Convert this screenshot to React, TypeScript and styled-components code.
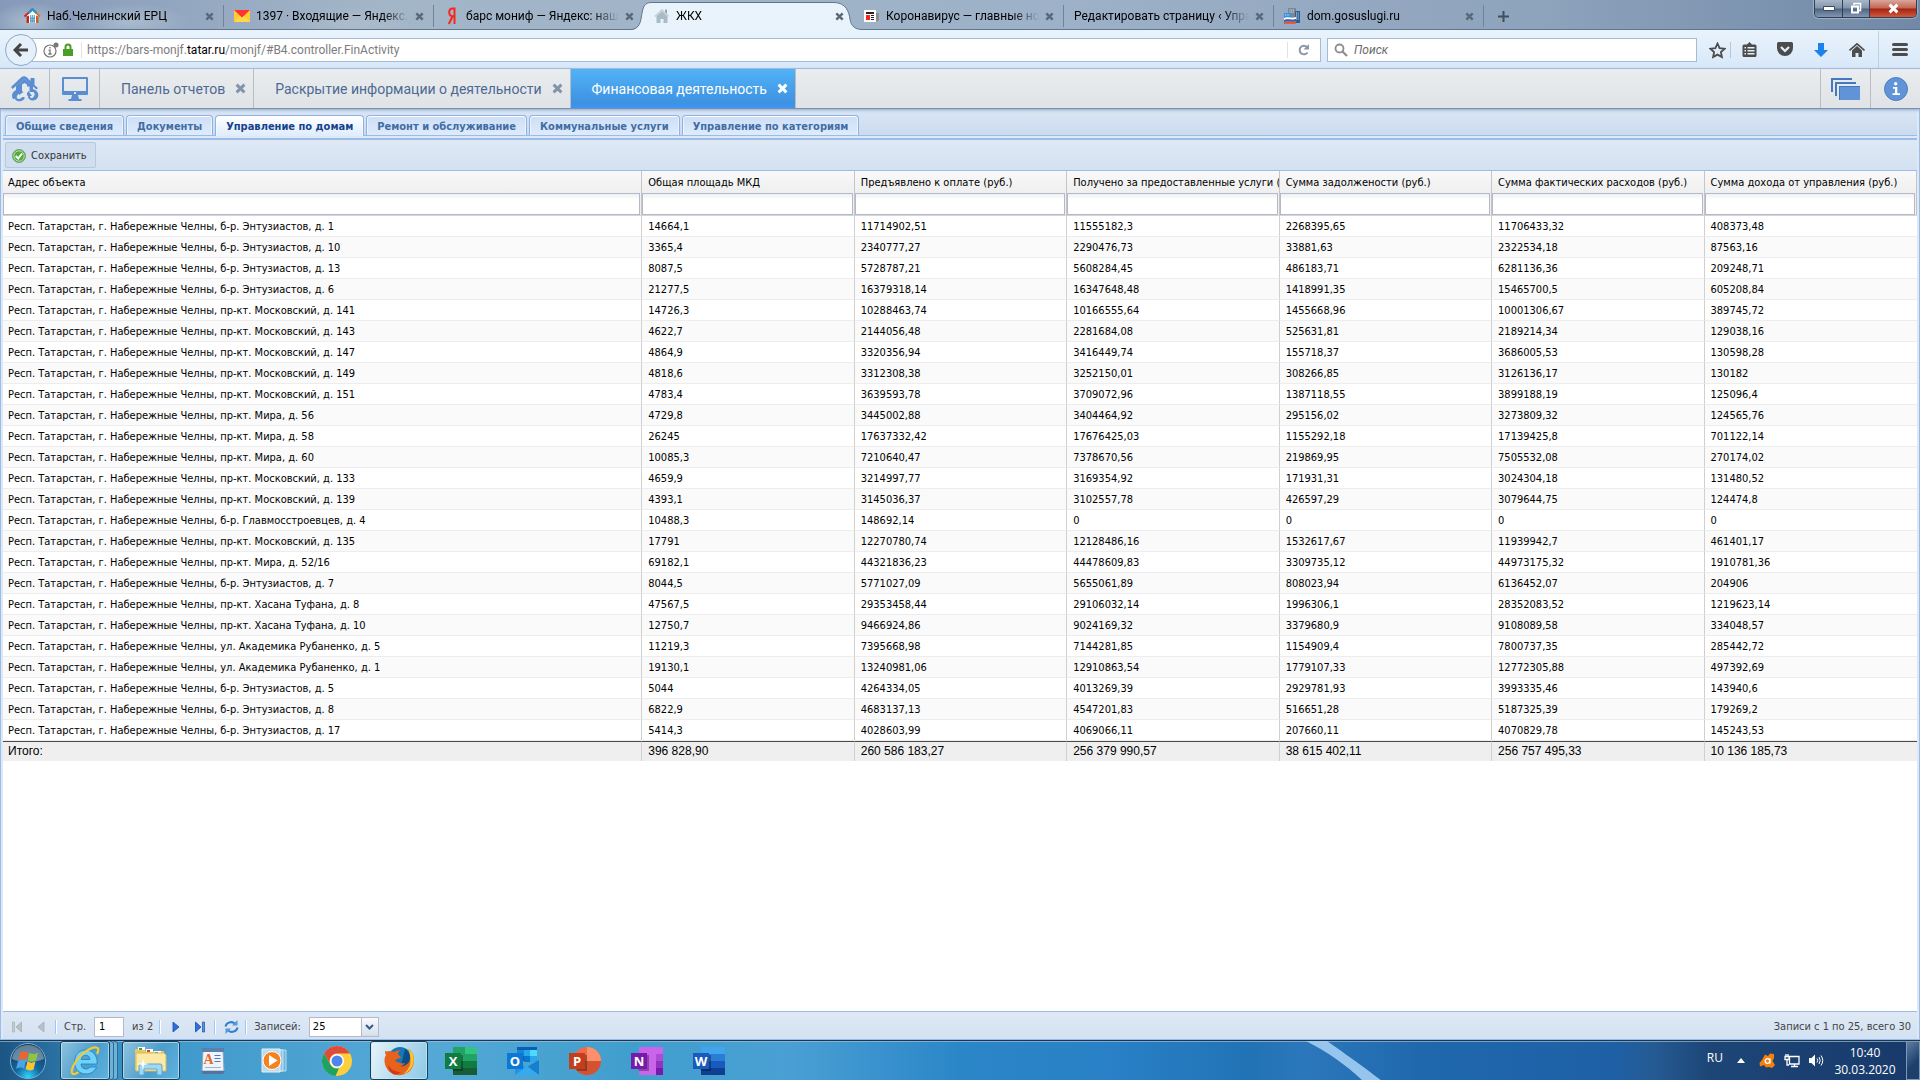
import React from "react";
import styled, { createGlobalStyle, css } from "styled-components";

const ui = `"DejaVu Sans Condensed", "Noto Sans", sans-serif`;
const system = `"Open Sans", "Noto Sans", sans-serif`;
const chrome = `Roboto, "Noto Sans", sans-serif`;

const Global = createGlobalStyle`
  *, *::before, *::after { box-sizing: border-box; }
  body { margin: 0; background: #fff; }
  button, input, select { font: inherit; color: inherit; margin: 0; padding: 0; border: 0; background: none; border-radius: 0; }
  button { cursor: pointer; }
  svg { display: block; flex: none; }
`;

const Screen = styled.div`
  min-height: 100vh;
  display: flex;
  flex-direction: column;
  font: 11px/14px ${ui};
  color: #000;
`;

/* ---------- Browser frame ---------- */

const TabStrip = styled.header`
  height: 30px;
  display: flex;
  align-items: stretch;
  padding-left: 14px;
  background:
    radial-gradient(ellipse 40px 20px at 30px 22px, #c3d3dc99, transparent),
    radial-gradient(ellipse 60px 18px at 130px 22px, #b9cbd899, transparent),
    radial-gradient(ellipse 60px 18px at 350px 24px, #c0c9d066, transparent),
    linear-gradient(90deg, #8599b900, #a3b6c8 20%, #9db1c8 55%, #8ea3bc 80%, #7189a7),
    #8599b9;
  border-bottom: 1px solid #5f7690;
  font: 12px/16px ${chrome};
  overflow: visible;
`;

const BrowserTab = styled.div<{ $active?: boolean; $plain?: boolean }>`
  position: relative;
  width: 210px;
  padding: 3px 10px 0;
  display: flex;
  align-items: center;
  gap: 6px;
  height: 29px;
  isolation: isolate;
  ${(p) =>
    !p.$active && !p.$plain &&
    css`
      &::after {
        content: "";
        position: absolute;
        right: 0;
        top: 5px;
        bottom: 2px;
        width: 1px;
        background: #70839b;
      }
    `}
`;

const ActiveShape = styled.svg`
  position: absolute;
  left: -14px;
  top: 0;
  z-index: -1;
`;

const TabTitle = styled.button`
  flex: 1;
  min-width: 0;
  overflow: hidden;
  white-space: nowrap;
  text-align: left;
  mask-image: linear-gradient(90deg, #000 calc(100% - 26px), transparent);
`;

const IconButton = styled.button`
  display: grid;
  place-items: center;
`;

const NewTab = styled(IconButton)`
  width: 38px;
  height: 29px;
  padding-top: 3px;
`;

const WindowButtons = styled.div`
  margin-left: auto;
  margin-right: 3px;
  height: 18px;
  display: flex;
  border: 1px solid #2e3f56;
  border-top: 0;
  border-radius: 0 0 5px 5px;
  overflow: hidden;
  box-shadow: 0 0 1px 1px #c3d0df88;
`;

const WindowButton = styled(IconButton)<{ $close?: boolean }>`
  width: ${(p) => (p.$close ? 47 : 27)}px;
  background: ${(p) =>
    p.$close
      ? "linear-gradient(#d9a69c, #c2654f 48%, #a32313 52%, #cf5a3c)"
      : "linear-gradient(#a9b7c8, #8295ad 48%, #4f6480 52%, #8296b0)"};
  & + & { border-left: 1px solid #2e3f56; }
`;

const NavBar = styled.nav`
  height: 39px;
  padding-top: 1px;
  display: flex;
  align-items: center;
  background: linear-gradient(#e9f3fc, #d8e8f9);
  border-bottom: 1px solid #a7bfda;
  font: 12px/16px ${chrome};
`;

const Back = styled(IconButton)`
  width: 32px;
  height: 32px;
  margin-left: 5px;
  border: 1px solid #8fa9c4;
  border-radius: 50%;
  background: #e6f0fa;
  z-index: 1;
`;

const UrlBox = styled.div`
  flex: 1;
  height: 24px;
  margin-left: -6px;
  padding-left: 11px;
  display: flex;
  align-items: center;
  background: #fff;
  border: 1px solid #a5bbd2;
`;

const Url = styled.a`
  flex: 1;
  margin-left: 6px;
  padding-left: 5px;
  border-left: 1px solid #dde3e8;
  color: #7c7c7c;
  text-decoration: none;
  b { font-weight: 400; color: #000; }
`;

const Reload = styled(IconButton)`
  width: 33px;
  height: 16px;
  border-left: 1px solid #dde3e8;
`;

const Search = styled.label`
  width: 370px;
  height: 24px;
  margin-left: 6px;
  padding-left: 6px;
  display: flex;
  align-items: center;
  gap: 6px;
  background: #fff;
  border: 1px solid #a5bbd2;
  input { flex: 1; outline: 0; font-style: italic; }
  input::placeholder { color: #6b6b6b; opacity: 1; }
`;

const NavTools = styled.div`
  display: flex;
  align-items: center;
  padding-left: 8px;
  height: 100%;
`;

const NavTool = styled(IconButton)<{ $kind?: "star" | "menu" }>`
  width: ${(p) => (p.$kind === "menu" ? 42 : p.$kind === "star" ? 26 : 36)}px;
  height: ${(p) => (p.$kind === "menu" ? "100%" : "16px")};
  ${(p) => p.$kind === "menu" && "margin-left: 3px; border-left: 1px solid #bfd0e2;"}
  ${(p) => p.$kind === "star" && "border-right: 1px solid #b4c5d6;"}
`;

/* ---------- Application bar ---------- */

const AppBar = styled.nav`
  height: 40px;
  display: flex;
  background: linear-gradient(#eaedf0, #e0e3e6);
  border-bottom: 1px solid #7391bd;
  box-shadow: 0 1px 3px #8fa3bf;
  z-index: 1;
  font: 14px/18px ${chrome};
`;

const AppIcon = styled(IconButton)<{ $right?: boolean }>`
  width: 50px;
  border: 0 solid #b9bdc1;
  border-width: ${(p) => (p.$right ? "0 0 0 1px" : "0 1px 0 0")};
`;

const AppTab = styled.div<{ $active?: boolean }>`
  display: flex;
  align-items: center;
  gap: 10px;
  padding: 0 7px 0 21px;
  border-right: 1px solid #b9bdc1;
  color: ${(p) => (p.$active ? "#fff" : "#4d6a92")};
  ${(p) => p.$active && "background: linear-gradient(#52b2f7, #3d92e2 88%, #3c96f8);"}
`;

const Spacer = styled.div`
  flex: 1;
`;

/* ---------- Panel ---------- */

const Panel = styled.main`
  flex: 1;
  display: flex;
  flex-direction: column;
  padding: 0 2px;
  background: #dfe9f6;
  border: 0 solid #99bce8;
  border-width: 0 1px 1px;
`;

const SubTabs = styled.div`
  height: 27px;
  display: flex;
  align-items: flex-end;
  gap: 2px;
  padding: 0 2px;
  background: linear-gradient(#dbe6f4, #cbdbef);
  border-bottom: 1px solid #99bce8;
`;

const SubTab = styled.button<{ $active?: boolean }>`
  height: ${(p) => (p.$active ? 21 : 20)}px;
  margin-bottom: ${(p) => (p.$active ? -1 : 0)}px;
  padding: 2px 10px 0;
  border: 1px solid #8db2e3;
  border-bottom: 0;
  border-radius: 4px 4px 0 0;
  box-shadow: inset 0 1px 0 #fff, inset 1px 0 0 #fff8, inset -1px 0 0 #fff8;
  background: ${(p) => (p.$active ? "linear-gradient(#fff, #deecfd)" : "linear-gradient(#ccdef6, #dfebfb)")};
  color: ${(p) => (p.$active ? "#15428b" : "#416da3")};
  font-weight: 700;
  white-space: nowrap;
`;

const Toolbar = styled.div`
  height: 33px;
  padding: 2px;
  margin-top: 2px;
  display: flex;
  align-items: center;
  border-top: 2px solid #99bce8;
  border-bottom: 1px solid #99bce8;
  background: linear-gradient(#dfe9f5, #d3e1f1);
`;

const Save = styled.button`
  height: 26px;
  padding: 1px 8px 0 6px;
  display: flex;
  align-items: center;
  gap: 5px;
  border: 1px solid #b5c9e0;
  border-radius: 2px;
  background: #d0deef;
  color: #333;
`;

const GridArea = styled.section`
  flex: 1;
  background: #fff;
`;

const Table = styled.table`
  width: 100%;
  table-layout: fixed;
  border-collapse: separate;
  border-spacing: 0;
  th, td { padding: 1px 0 0 6px; }
  th:first-child, td:first-child { padding-left: 5px; }
`;

const HeadCell = styled.th`
  height: 22px;
  font-weight: 400;
  text-align: left;
  white-space: nowrap;
  overflow: hidden;
  background: linear-gradient(#f9f9f9, #eeeff0);
  border-right: 1px solid #c5c5c5;
`;

const FilterCell = styled.td`
  &&&, &&&:first-child { padding: 0 1px 0 0; }
  height: 23px;
  background: #eeeff0;
  border-right: 1px solid #c5c5c5;
  border-bottom: 1px solid #d5d5d5;
`;

const FilterInput = styled.input`
  display: block;
  width: 100%;
  height: 22px;
  padding: 0 4px;
  border: 1px solid #b5b8c8;
  background: linear-gradient(#eef0f1, #fff 6px);
`;

const Row = styled.tr`
  &:nth-child(even) { background: #fafafa; }
`;

const Cell = styled.td`
  height: 21px;
  white-space: nowrap;
  overflow: hidden;
  border-bottom: 1px solid #ededed;
  &:not(:last-child) { border-right: 1px solid #d0d0d0; }
`;

const TotalCell = styled.td`
  &&& { padding-top: 0; padding-bottom: 1px; }
  height: 20px;
  border-top: 1px solid #4a4a4a;
  background: #efefef;
  font: 12px/16px "Liberation Sans", Arial, sans-serif;
  &:not(:last-child) { border-right: 1px solid #d0d0d0; }
`;

const Pager = styled.footer`
  height: 28px;
  display: flex;
  align-items: center;
  padding: 2px 6px 0 2px;
  border-top: 1px solid #99bce8;
  background: linear-gradient(#dfe9f5, #d3e1f1);
  color: #444;
`;

const PagerButton = styled(IconButton)`
  width: 24px;
  height: 22px;
`;

const Divider = styled.span`
  width: 2px;
  height: 14px;
  margin: 0 3px 0 2px;
  border-left: 1px solid #98c8ff;
  border-right: 1px solid #fff;
`;

const PagerLabel = styled.label`
  display: flex;
  align-items: center;
  gap: 8px;
  padding: 0 4px;
`;

const PageInput = styled.input`
  width: 30px;
  height: 20px;
  padding: 0 4px;
  border: 1px solid #b5b8c8;
  background: #fff;
  color: #000;
`;

const SizeBox = styled.span`
  display: flex;
  height: 20px;
  border: 1px solid #b5b8c8;
  background: #fff;
  color: #000;
  select { appearance: none; width: 51px; padding-left: 3px; outline: 0; }
`;

const SizeArrow = styled.span`
  width: 17px;
  display: grid;
  place-items: center;
  border-left: 1px solid #b5b8c8;
  background: linear-gradient(#f8fafd, #d5dfec);
`;

/* ---------- Taskbar ---------- */

const Taskbar = styled.footer`
  position: relative;
  height: 40px;
  display: flex;
  align-items: stretch;
  gap: 4px;
  border-top: 1px solid #1c3550;
  box-shadow: inset 0 1px 0 #9cc4e0aa;
  background: linear-gradient(90deg, #1b5583, #2a72a3 3%, #3c97c9 7%, #55a9d6 22%, #409ecd 33%, #4aa0d4 41%, #2b86c8 50%, #2980c6 58%, #2173b6 65%, #2c77bc 68%, #1f68ae 74%, #1e60a6 84%, #255b94 86%, #1d4677 89%, #17396a 100%);
  color: #fff;
  overflow: hidden;
`;

const Shine = styled.svg`
  position: absolute;
  left: 68%;
  top: 0;
  pointer-events: none;
`;

const TaskButton = styled(IconButton)<{ $state?: "open" | "focus" }>`
  width: 58px;
  position: relative;
  ${(p) =>
    p.$state &&
    css`
      border: 1px solid #16405f;
      border-radius: 3px;
      box-shadow: inset 0 0 0 1px #cfe9f7aa;
      background: ${p.$state === "focus"
        ? "linear-gradient(110deg, #e8f4fa, #aed8ec 60%, #8cc9e6)"
        : "linear-gradient(120deg, #8fc3e0, #4d9dcb 55%, #5fb4e0)"};
    `}
`;

const StackedTask = styled.div`
  width: 58px;
  display: flex;
  ${TaskButton} { width: 50px; }
`;

const StackEdge = styled.span`
  width: 4px;
  border: 1px solid #2b6a94;
  border-left: 0;
  border-radius: 0 3px 3px 0;
  background: #6db3d8;
`;

const Start = styled(IconButton)`
  width: 56px;
`;

const Tray = styled.div`
  margin-left: auto;
  display: flex;
  align-items: center;
  gap: 8px;
  font: 12px/17px ${system};
`;

const Lang = styled.button`
  padding-bottom: 6px;
`;

const TrayMore = styled(IconButton)`
  width: 20px;
  height: 20px;
`;

const Clock = styled.time`
  width: 66px;
  text-align: center;
`;

const ShowDesktop = styled.button`
  align-self: stretch;
  width: 14px;
  border: 1px solid #7f98b5;
  background: linear-gradient(135deg, #5f7ea3, #1d3f6c 60%);
`;

/* ---------- Drawings ---------- */

const Cross = ({ color = "#5a6878", size = 9 }: { color?: string; size?: number }) => (
  <svg width={size} height={size} viewBox="0 0 9 9">
    <path d="M1.3 1.3 7.7 7.7M7.7 1.3 1.3 7.7" stroke={color} strokeWidth="2.4" />
  </svg>
);

const HouseFav = () => (
  <svg width="17" height="16" viewBox="0 0 17 16">
    <path d="M3 7v8h3V9h5v6h3V7L8.500 2z" fill="#fff" />
    <path d="M2.500 8.500V15H5V7.500z" fill="#c8281c" />
    <path d="M14.500 8.500V15H12V7.500z" fill="#d0602a" />
    <path d="M.5 8.500 8.500 1.200" stroke="#d0281c" strokeWidth="2" />
    <path d="M8.500 1.200 16 8.500" stroke="#d9742e" strokeWidth="2" />
    <path d="M4.500 5 8.500 1.200 12.500 5" fill="none" stroke="#2196c8" strokeWidth="2.200" />
    <path d="M6 8h5M6 10.500h5M6 13h5" stroke="#2a9bd0" strokeWidth="1.500" strokeDasharray="1.300 .6" />
  </svg>
);
const MailFav = () => (
  <svg width="16" height="12" viewBox="0 0 16 12">
    <path d="M0 0h16v12H0z" fill="#fc3" />
    <path d="M0 0h16L8 7.500z" fill="#f33" />
    <path d="m0 12 6-6 2 2 2-2 6 6z" fill="#ffd84a" />
  </svg>
);
const YandexFav = () => (
  <svg width="16" height="18" viewBox="-1 0 16 18">
    <path d="M9.500 17V1.500H7.800C5.500 1.500 4.200 3 4.200 5.300s1.200 3.900 3.400 3.900h1.900M7.500 9.500 3.800 17" fill="none" stroke="#f5281c" strokeWidth="2" />
  </svg>
);
const GreyHouseFav = () => (
  <svg width="16" height="16" viewBox="0 0 15 16">
    <path d="M2 8v7h4v-4h3v4h4V7L7.500 2.500z" fill="#a8bcc8" />
    <path d="M.5 8.500 7.500 2l6.500 6.500" fill="none" stroke="#c8d3d8" strokeWidth="1.800" />
    <path d="M10.500 1.500h2V6l-2-2z" fill="#93a6b2" />
  </svg>
);
const NewsFav = () => (
  <svg width="16" height="12" viewBox="0 0 16 12">
    <path d="M0 0h12v12H0z" fill="#fff" />
    <path d="M12 3h3v7l-3 2z" fill="#8c8c8c" />
    <path d="M2 2h8v2H2zM7 5h3v1H7zm0 2h3v1H7zm0 2h3v1H7z" fill="#222" />
    <path d="M2 5h4v5H2z" fill="#f22" />
  </svg>
);
const GosFav = () => (
  <svg width="17" height="16" viewBox="0 0 17 16">
    <path d="M4 0h8v12H4z" fill="#7d8794" />
    <path d="M11 3h5v12h-5z" fill="#2b5f94" />
    <path d="M5.500 2h5M5.500 4h5M12 5h3M12 7h3M12 9h3M12 11h3" stroke="#d6e4ef" strokeDasharray="1 .7" />
    <path d="M0 5h7v6H0z" fill="#3d8fdb" />
    <path d="M1 7h5" stroke="#d6e4ef" strokeDasharray="1 .7" />
    <path d="M0 10c4-2 8 1 12-1v2c-4 2-8-1-12 1z" fill="#fff" />
    <path d="M0 12c4-2 8 1 12-1v2c-4 2-8-1-12 1z" fill="#2463c4" />
    <path d="M0 14c4-2 8 1 12-1v2.500c-4 1-8-.5-12 .5z" fill="#e2522c" />
  </svg>
);

const BarsLogo = () => (
  <svg width="28" height="27" viewBox="0 0 28 27">
    <path d="M0 12 10 2.500Q13 0 16 2.500L19.500 6V3h4v7L27 13l-1.500 1.500L13.500 4 1.500 14z" fill="#5b8dd3" />
    <path d="M5 11 13.500 4 22 11v3c5 1.500 6.500 5.500 4.500 9-3 4.500-10 2.500-9.500-2.500l-3 .5 3.500-5 3.500 5h-2c0 2.500 3 3 3.500.5V17h-4V11.500h-5V24c-3 3-7 3-9.500.5l1.500-1.500c2 1.500 4 1 5.500-.5v-5c-3 .5-6 3-5 6L2 24c-2.500-4 0-7.500 3-9z" fill="#5b8dd3" />
    <path d="M11 9.500 13.500 8l2.500 1.500V22h-5zM22 17v5c2-1 2.500-3.500 0-5z" fill="#e6e9ec" />
    <path d="m8 14.500 4.500 2.500-4.500 3z" fill="#5b8dd3" />
  </svg>
);
const MonitorIcon = () => (
  <svg width="26" height="24" viewBox="0 0 26 24">
    <path d="M1 0h24a1 1 0 0 1 1 1v16a1 1 0 0 1-1 1h-9l1 4h2.500v2h-13v-2H9l1-4H1a1 1 0 0 1-1-1V1a1 1 0 0 1 1-1zm1 2v12h22V2z" fill="#5b8dd3" fillRule="evenodd" />
    <path d="M12 15h2v2h-2z" fill="#dce6f2" />
  </svg>
);
const WindowsIcon = () => (
  <svg width="29" height="22" viewBox="0 0 29 22">
    <path d="M1 14V1h20M5 18V5h20" fill="none" stroke="#4578be" strokeWidth="2" />
    <path d="M8 8h21v14H8z" fill="#6194d6" />
    <path d="M8 8.500h21M8.500 8v14" stroke="#4578be" />
  </svg>
);
const InfoIcon = () => (
  <svg width="24" height="24" viewBox="0 0 24 24">
    <circle cx="12" cy="12" r="11.500" fill="#6194d6" stroke="#4c7fc4" />
    <circle cx="11.700" cy="6.700" r="1.700" fill="#fff" />
    <path d="M9 10h4.300v6.200H16V18H8.500v-1.800H11v-4.400H9z" fill="#fff" />
  </svg>
);
const SaveIcon = () => (
  <svg width="14" height="14" viewBox="0 0 14 14">
    <circle cx="7" cy="7" r="6.500" fill="#4fae3c" stroke="#7e9c7b" />
    <circle cx="7" cy="7" r="5.200" fill="none" stroke="#b7dfae" />
    <path d="m3.800 7 2.400 2.500L10 4.500" fill="none" stroke="#fff" strokeWidth="2" />
  </svg>
);
const Arrow = ({ flip, bar, off }: { flip?: boolean; bar?: boolean; off?: boolean }) => (
  <svg width="12" height="12" viewBox="0 0 12 12" transform={flip ? "scale(-1 1)" : undefined}>
    <path d={bar ? "M1.500 1v10L7 6z" : "M3 1v10l6-5z"} fill={off ? "#b9bfc6" : "#2f6fdc"} stroke={off ? "#a5adb6" : "#1b4fb4"} strokeWidth=".8" />
    {bar && <path d="M8.500 1h2v10h-2z" fill={off ? "#c9ced3" : "#5d8fe8"} stroke={off ? "#a5adb6" : "#1b4fb4"} strokeWidth=".7" />}
  </svg>
);
const RefreshIcon = () => (
  <svg width="15" height="14" viewBox="0 0 15 14" fill="none" stroke="#2e7fce" strokeWidth="2">
    <path d="M1.500 6.500C2 3 7 .5 11 3.500M13.500 7.500C13 11 8 13.500 4 10.500" />
    <path d="M13.500 0v5.500H8zM1.500 14V8.500H7z" fill="#4f9ae0" stroke="none" />
  </svg>
);

const StartOrb = () => (
  <svg width="38" height="38" viewBox="0 0 38 38">
    <defs>
      <radialGradient id="orb" cx=".5" cy=".95" r=".9">
        <stop offset="0" stopColor="#2fd4ff" />
        <stop offset=".4" stopColor="#13679f" />
        <stop offset="1" stopColor="#16395c" />
      </radialGradient>
    </defs>
    <circle cx="19" cy="19" r="17.500" fill="url(#orb)" stroke="#7fb0cf" />
    <path d="M3 17C4 8 11 3 19 3s15 5 16 14c-9 4-23 4-32 0z" fill="#fff" opacity=".35" />
    <path d="M11 11c3-2 5-2 8-.5L17.500 18c-3-1.500-5-1-8 .5z" fill="#f0642a" />
    <path d="M20 11c3 1.500 6 1.500 9-.5l-2 8c-3 1.500-5 1.500-8 0z" fill="#8fc63e" />
    <path d="M9 19.500c3-1.500 5-2 8-.5l-2 7.500c-2.500-1.500-5-1-8 .5z" fill="#4aa5e6" />
    <path d="M18.500 19.500c3 1.500 5 1.500 8 0l-2 8c-3 1.500-5 1-8-.5z" fill="#fcc52e" />
  </svg>
);
const IeIcon = () => (
  <svg width="32" height="32" viewBox="0 0 32 32">
    <path d="M16.500 5C9.500 5 5.500 10.500 5.500 17S10 29 17 29c5 0 9-3 10.500-7H21c-1 1.500-2.300 2-4 2-3 0-5-2-5-5h16c1-8-4-14-11.500-14zM12.200 14.500c.5-2.700 2-4.200 4.500-4.200s4 1.500 4.300 4.200z" fill="#6fd2fa" stroke="#1c7fc0" strokeWidth=".8" />
    <path d="M28 9c1.500-3 2-6-.5-6.500-6-1-18 8-23 18-2.500 5-2.500 9 1 8.500 1.500-.2 3-1 4-1.800" fill="none" stroke="#f6c833" strokeWidth="2.200" />
  </svg>
);
const ExplorerIcon = () => (
  <svg width="34" height="30" viewBox="0 0 34 30">
    <path d="M1 3h9l2 2h18v19H1z" fill="#e9c765" />
    <path d="M4 1h7v3H4zM12 3h7v3h-7zM20 5h7v3h-7z" fill="#fff" />
    <path d="M5 2h3v2H5z" fill="#2faa3a" /><path d="M13 4h3v2h-3z" fill="#d6452a" /><path d="M21 6h3v2h-3z" fill="#2b7bd8" />
    <path d="M2 7h28l2 2v16H2z" fill="#fbe9a7" stroke="#d9b95a" />
    <path d="M5 29V20q0-2 2-2h19q2 0 2 2v9h-5v-6H10v6z" fill="#9fd8f3" stroke="#5ba6cf" />
    <path d="m9 12 1 5 5 1-5 1-1 5-1-5-5-1 5-1z" fill="#fff" />
  </svg>
);
const WordPadIcon = () => (
  <svg width="24" height="28" viewBox="0 0 24 28">
    <path d="M2 3h20l1 21H1z" fill="#eef4fb" stroke="#8ba6c6" />
    <path d="M1 1h22v4H1z" fill="#5d7fae" /><path d="M0 24h24l-2 3H2z" fill="#5673a0" />
    <text x="2.500" y="17" fontFamily="Liberation Serif, serif" fontWeight="700" fontSize="14" fill="#ea6a1c">A</text>
    <path d="M13.500 8.500h6M13.500 11.500h6M13.500 14.500h6" stroke="#4b79c0" /><path d="M4 20.500h16" stroke="#9fb2ca" />
  </svg>
);
const PlayerIcon = () => (
  <svg width="28" height="26" viewBox="0 0 28 26">
    <path d="M9 2h16v21H9z" fill="#6fb3db" stroke="#b9dcf0" /><path d="M6 2h16v21H6z" fill="#8ec5e5" stroke="#cbe6f5" />
    <path d="M1 1h18v23H1z" fill="#bcdcee" stroke="#e2f2fa" />
    <circle cx="11" cy="12.500" r="9" fill="#f5821f" stroke="#fff" />
    <path d="M8 7v11l8.500-5.500z" fill="#fff" />
  </svg>
);
const ChromeIcon = () => (
  <svg width="30" height="30" viewBox="0 0 30 30">
    <circle cx="15" cy="15" r="15" fill="#fdd03b" />
    <path d="M15 0a15 15 0 0 1 13 7.500H15A7.500 7.500 0 0 0 8.500 18.700L2 7.500A15 15 0 0 1 15 0z" fill="#de4b3c" />
    <path d="M2 7.500 8.500 18.750a7.500 7.500 0 0 0 8.500 3.500L13.500 30A15 15 0 0 1 2 7.500z" fill="#1da361" />
    <circle cx="15" cy="15" r="7" fill="#fff" /><circle cx="15" cy="15" r="5.500" fill="#4a86ec" />
  </svg>
);
const FirefoxIcon = () => (
  <svg width="32" height="32" viewBox="0 0 32 32">
    <circle cx="17" cy="14" r="12" fill="#1577b8" />
    <path d="M22 4c4 2 7 7 6 13-1 5-5 9-11 9z" fill="#0b4f8a" />
    <path d="M2 6c0 2 .5 3 1 4-2 3-2 8 0 12 3 6 9 9 15 8 8-1 13-7 13-15 0-5-2-9-6-11 3 5 3 9 1 13-2 3-6 5-9 4 2 0 4-1 5-3-3 1-5 0-7-1-2 0-3-1-2-2 1-2 3-1 5-2 0-2-3-3-3-4 0-2 1-3 3-4-3 0-5 1-7 2-2 0-3-1-5-1-2 1-3 0-4 0z" fill="#e8621c" />
    <path d="M25 4c5 3 6.500 8 5.500 13-1 6-5 10-10 12 4-4 7-7 7-13 0-5-1-9-2.500-12z" fill="#fbc52c" />
    <path d="M5 20c3 5 8 7 13 7-2 2-5 3-8 2-3-2-5-5-5-9z" fill="#d03a1c" />
  </svg>
);

const OfficeIcon = ({ letter, tile, tones, round }: { letter: string; tile: string; tones: string[]; round?: boolean }) => (
  <svg width="32" height="28" viewBox="0 0 32 28">
    {round ? (
      <g>
        <circle cx="18" cy="14" r="14" fill={tones[0]} />
        <path d="M18 0a14 14 0 0 1 14 14H18z" fill={tones[1]} />
        <path d="M4 14h28a14 14 0 0 1-28 0z" fill={tones[2]} />
      </g>
    ) : (
      <g>
        <path d="M8 0h12v7H8z" fill={tones[0]} /><path d="M20 0h12v7H20z" fill={tones[1]} />
        <path d="M8 7h12v7H8z" fill={tones[2]} /><path d="M20 7h12v7H20z" fill={tones[3]} />
        <path d="M8 14h12v7H8z" fill={tones[4]} /><path d="M20 14h12v7H20z" fill={tones[5]} />
        <path d="M8 21h12v7H8z" fill={tones[6]} /><path d="M20 21h12v7H20z" fill={tones[7]} />
      </g>
    )}
    <path d="M2 8h16v16H8z" opacity=".3" />
    <rect y="6" width="16" height="16" fill={tile} />
    <text x="8" y="18.500" textAnchor="middle" fontFamily="Open Sans, sans-serif" fontWeight="700" fontSize="13" fill="#fff">{letter}</text>
  </svg>
);

const OneNoteIcon = () => (
  <svg width="32" height="28" viewBox="0 0 32 28">
    <path d="M8 0h24v7H8z" fill="#ca64ea" />
    <path d="M8 7h17v21H8z" fill="#ca64ea" />
    <path d="M25 7h7v7h-7z" fill="#ae4bd5" /><path d="M25 14h7v7h-7z" fill="#9332bf" /><path d="M25 21h7v7h-7z" fill="#7719aa" />
    <path d="M2 8h16v16H8z" opacity=".3" />
    <rect y="6" width="16" height="16" fill="#7719aa" />
    <text x="8" y="18.500" textAnchor="middle" fontFamily="Open Sans, sans-serif" fontWeight="700" fontSize="13" fill="#fff">N</text>
  </svg>
);

const OutlookIcon = () => (
  <svg width="32" height="28" viewBox="0 0 32 28">
    <path d="M10 0h20v14H10z" fill="#0a5fb4" />
    <path d="M10 3h7v6h-7z" fill="#1b84d8" /><path d="M17 3h6v6h-6z" fill="#28a8ea" /><path d="M23 3h7v6h-7z" fill="#50d9ff" />
    <path d="M17 9h6v6h-6z" fill="#0a78d0" /><path d="M23 9h7v6h-7z" fill="#28a8ea" />
    <path d="M8 14l12 7 12-8v15H8z" fill="#2196e0" /><path d="m20 20 12 8V13z" fill="#1580cc" /><path d="m8 28 12-9 12 9z" fill="#35abef" />
    <rect y="6" width="16" height="16" fill="#0a78d4" />
    <text x="8" y="18.500" textAnchor="middle" fontFamily="Open Sans, sans-serif" fontWeight="700" fontSize="13" fill="#fff">O</text>
  </svg>
);

const StarIcon = () => (
  <svg width="17" height="17" viewBox="0 0 17 17"><path d="m8.500 1.500 2.100 4.600 5 .6-3.700 3.400 1 5-4.400-2.500-4.400 2.500 1-5L1.400 6.700l5-.6z" fill="none" stroke="#4c4c4c" strokeWidth="1.800" /></svg>
);
const ListIcon = () => (
  <svg width="15" height="15" viewBox="0 0 15 15">
    <path d="M5 2.500 7.500 0 10 2.500h3a1.500 1.500 0 0 1 1.500 1.500v9.500A1.500 1.500 0 0 1 13 15H2A1.500 1.500 0 0 1 .5 13.500V4A1.500 1.500 0 0 1 2 2.500z" fill="#4c4c4c" />
    <path d="M2.500 5.700h1.500M5.500 5.700h7M2.500 8.700h1.500M5.500 8.700h7M2.500 11.700h1.500M5.500 11.700h7" stroke="#e6f0fa" strokeWidth="1.600" />
  </svg>
);
const PocketIcon = () => (
  <svg width="16" height="15" viewBox="0 0 16 15"><path d="M1.500 0h13A1.500 1.500 0 0 1 16 1.500V6a8 8 0 0 1-16 0V1.500A1.500 1.500 0 0 1 1.500 0z" fill="#4c4c4c" /><path d="m4 5 4 4 4-4" fill="none" stroke="#e6f0fa" strokeWidth="2.200" /></svg>
);
const DownIcon = () => (
  <svg width="14" height="14" viewBox="0 0 14 14"><path d="M4 0h6v7h4l-7 7-7-7h4z" fill="#1a82ea" /></svg>
);
const HomeIcon = () => (
  <svg width="16" height="14" viewBox="0 0 16 14"><path d="M.5 7.500 8 .8l7.500 6.700" fill="none" stroke="#4c4c4c" strokeWidth="1.600" /><path d="M3 7.500 8 3l5 4.500V14H9.500v-4h-3v4H3z" fill="#4c4c4c" /></svg>
);
const MenuIcon = () => (
  <svg width="16" height="13" viewBox="0 0 16 13"><path d="M1.500 1.500h13M1.500 6.500h13M1.500 11.500h13" stroke="#4c4c4c" strokeWidth="3" strokeLinecap="round" /></svg>
);

/* ---------- Data ---------- */

const browserTabs = [
  { title: "Наб.Челнинский ЕРЦ", icon: <HouseFav /> },
  { title: "1397 · Входящие — Яндекс.Почта", icon: <MailFav /> },
  { title: "барс мониф — Яндекс: нашлось", icon: <YandexFav />, plain: true },
  { title: "ЖКХ", icon: <GreyHouseFav />, active: true },
  { title: "Коронавирус — главные новости", icon: <NewsFav /> },
  { title: "Редактировать страницу ‹ Управляющая" },
  { title: "dom.gosuslugi.ru", icon: <GosFav /> },
];

const columns = [
  "Адрес объекта",
  "Общая площадь МКД",
  "Предъявлено к оплате (руб.)",
  "Получено за предоставленные услуги (руб.)",
  "Сумма задолжености (руб.)",
  "Сумма фактических расходов (руб.)",
  "Сумма дохода от управления (руб.)",
];

const city = "Респ. Татарстан, г. Набережные Челны, ";
const rows = `б-р. Энтузиастов, д. 1|14664,1|11714902,51|11555182,3|2268395,65|11706433,32|408373,48
б-р. Энтузиастов, д. 10|3365,4|2340777,27|2290476,73|33881,63|2322534,18|87563,16
б-р. Энтузиастов, д. 13|8087,5|5728787,21|5608284,45|486183,71|6281136,36|209248,71
б-р. Энтузиастов, д. 6|21277,5|16379318,14|16347648,48|1418991,35|15465700,5|605208,84
пр-кт. Московский, д. 141|14726,3|10288463,74|10166555,64|1455668,96|10001306,67|389745,72
пр-кт. Московский, д. 143|4622,7|2144056,48|2281684,08|525631,81|2189214,34|129038,16
пр-кт. Московский, д. 147|4864,9|3320356,94|3416449,74|155718,37|3686005,53|130598,28
пр-кт. Московский, д. 149|4818,6|3312308,38|3252150,01|308266,85|3126136,17|130182
пр-кт. Московский, д. 151|4783,4|3639593,78|3709072,96|1387118,55|3899188,19|125096,4
пр-кт. Мира, д. 56|4729,8|3445002,88|3404464,92|295156,02|3273809,32|124565,76
пр-кт. Мира, д. 58|26245|17637332,42|17676425,03|1155292,18|17139425,8|701122,14
пр-кт. Мира, д. 60|10085,3|7210640,47|7378670,56|219869,95|7505532,08|270174,02
пр-кт. Московский, д. 133|4659,9|3214997,77|3169354,92|171931,31|3024304,18|131480,52
пр-кт. Московский, д. 139|4393,1|3145036,37|3102557,78|426597,29|3079644,75|124474,8
б-р. Главмосстроевцев, д. 4|10488,3|148692,14|0|0|0|0
пр-кт. Московский, д. 135|17791|12270780,74|12128486,16|1532617,67|11939942,7|461401,17
пр-кт. Мира, д. 52/16|69182,1|44321836,23|44478609,83|3309735,12|44973175,32|1910781,36
б-р. Энтузиастов, д. 7|8044,5|5771027,09|5655061,89|808023,94|6136452,07|204906
пр-кт. Хасана Туфана, д. 8|47567,5|29353458,44|29106032,14|1996306,1|28352083,52|1219623,14
пр-кт. Хасана Туфана, д. 10|12750,7|9466924,86|9024169,32|3379680,9|9108089,58|334048,57
ул. Академика Рубаненко, д. 5|11219,3|7395668,98|7144281,85|1154909,4|7800737,35|285442,72
ул. Академика Рубаненко, д. 1|19130,1|13240981,06|12910863,54|1779107,33|12772305,88|497392,69
б-р. Энтузиастов, д. 5|5044|4264334,05|4013269,39|2929781,93|3993335,46|143940,6
б-р. Энтузиастов, д. 8|6822,9|4683137,13|4547201,83|516651,28|5187325,39|179269,2
б-р. Энтузиастов, д. 17|5414,3|4028603,99|4069066,11|207660,11|4070829,78|145243,53`
  .split("\n")
  .map((line) => (city + line).split("|"));

const totals = ["Итого:", "396 828,90", "260 586 183,27", "256 379 990,57", "38 615 402,11", "256 757 495,33", "10 136 185,73"];

const appTabs = ["Панель отчетов", "Раскрытие информации о деятельности", "Финансовая деятельность"];
const subTabs = ["Общие сведения", "Документы", "Управление по домам", "Ремонт и обслуживание", "Коммунальные услуги", "Управление по категориям"];

export default function App() {
  return (
    <Screen>
      <Global />
      <TabStrip>
        {browserTabs.map((t) => (
          <BrowserTab key={t.title} $active={t.active} $plain={t.plain}>
            {t.active && (
              <ActiveShape width="238" height="30" viewBox="0 0 238 30">
                <path d="M0 30C8 30 10 24 11 19 13 6 14 2.500 22 2.500H204C216 2.500 219 12 220 19 221 26 225 29.500 232 29.500V30z" fill="#e9f3fc" />
                <path d="M0 29.500C8 29.500 10 24 11 19 13 6 14 2.500 22 2.500H204C216 2.500 219 12 220 19 221 26 225 29.500 232 29.500" fill="none" stroke="#5f7690" />
              </ActiveShape>
            )}
            {t.icon}
            <TabTitle>{t.title}</TabTitle>
            <IconButton aria-label="Закрыть вкладку"><Cross /></IconButton>
          </BrowserTab>
        ))}
        <NewTab aria-label="Новая вкладка">
          <svg width="11" height="11" viewBox="0 0 11 11"><path d="M5.500 0v11M0 5.500h11" stroke="#444f5c" strokeWidth="2" /></svg>
        </NewTab>
        <WindowButtons>
          <WindowButton aria-label="Свернуть"><svg width="12" height="5"><path d="M.5.500h11v4H.5z" fill="#fff" stroke="#3a4a60" /></svg></WindowButton>
          <WindowButton aria-label="Восстановить">
            <svg width="12" height="13" viewBox="0 0 12 13" fill="none"><path d="M4 3V1.500h6.500v7H9" stroke="#fff" strokeWidth="1.500" /><path d="M2 4.500h6v6H2z" stroke="#fff" strokeWidth="2" /></svg>
          </WindowButton>
          <WindowButton $close aria-label="Закрыть"><Cross color="#fff" size={11} /></WindowButton>
        </WindowButtons>
      </TabStrip>

      <NavBar>
        <Back aria-label="Назад">
          <svg width="16" height="14" viewBox="0 0 16 14"><path d="M8 1 2 7l6 6M2 7h13" fill="none" stroke="#444" strokeWidth="3" /></svg>
        </Back>
        <UrlBox>
          <svg width="16" height="16" viewBox="0 0 16 16">
            <circle cx="7" cy="9" r="6" fill="none" stroke="#777" strokeWidth="1.200" />
            <path d="M7 5v1.600M5.500 8.200H7V12M5.300 12h3.400" stroke="#777" strokeWidth="1.300" fill="none" />
            <circle cx="13" cy="3" r="2.500" fill="#777" />
          </svg>
          <svg width="16" height="16" viewBox="0 0 16 16"><path d="M6.500 7V5a2.500 2.500 0 0 1 5 0v2" fill="none" stroke="#4c9e27" strokeWidth="2" /><path d="M4 7h10v7H4z" fill="#4c9e27" /></svg>
          <Url href="#B4.controller.FinActivity">https://bars-monjf.<b>tatar.ru</b>/monjf/#B4.controller.FinActivity</Url>
          <Reload aria-label="Обновить">
            <svg width="12" height="12" viewBox="0 0 12 12"><path d="M9.500 8.500A4.300 4.300 0 1 1 9 3" fill="none" stroke="#8a98a8" strokeWidth="2" /><path d="M11 0v5.500H5.500z" fill="#8a98a8" /></svg>
          </Reload>
        </UrlBox>
        <Search>
          <svg width="14" height="14" viewBox="0 0 14 14"><circle cx="5.500" cy="5.500" r="4" fill="none" stroke="#8d8d8d" strokeWidth="1.800" /><path d="m8.500 8.500 4.500 4.500" stroke="#8d8d8d" strokeWidth="2.200" /></svg>
          <input placeholder="Поиск" aria-label="Поиск" />
        </Search>
        <NavTools>
          <NavTool $kind="star" aria-label="В закладки"><StarIcon /></NavTool>
          <NavTool aria-label="Закладки"><ListIcon /></NavTool>
          <NavTool aria-label="Pocket"><PocketIcon /></NavTool>
          <NavTool aria-label="Загрузки"><DownIcon /></NavTool>
          <NavTool aria-label="Домой"><HomeIcon /></NavTool>
          <NavTool $kind="menu" aria-label="Меню"><MenuIcon /></NavTool>
        </NavTools>
      </NavBar>

      <AppBar>
        <AppIcon aria-label="Главная"><BarsLogo /></AppIcon>
        <AppIcon aria-label="Рабочий стол"><MonitorIcon /></AppIcon>
        {appTabs.map((t, i) => (
          <AppTab key={t} $active={i === 2}>
            <button>{t}</button>
            <IconButton aria-label="Закрыть"><Cross color={i === 2 ? "#fff" : "#8294aa"} size={11} /></IconButton>
          </AppTab>
        ))}
        <Spacer />
        <AppIcon $right aria-label="Окна"><WindowsIcon /></AppIcon>
        <AppIcon $right aria-label="Информация"><InfoIcon /></AppIcon>
      </AppBar>

      <Panel>
        <SubTabs>
          {subTabs.map((t, i) => (
            <SubTab key={t} $active={i === 2}>{t}</SubTab>
          ))}
        </SubTabs>
        <Toolbar>
          <Save><SaveIcon />Сохранить</Save>
        </Toolbar>
        <GridArea>
          <Table>
            <colgroup>
              <col width="33.4%" />
              {columns.slice(1).map((c) => <col key={c} width="11.1%" />)}
            </colgroup>
            <thead>
              <tr>{columns.map((c) => <HeadCell key={c} scope="col">{c}</HeadCell>)}</tr>
              <tr>{columns.map((c) => <FilterCell key={c}><FilterInput aria-label={c} /></FilterCell>)}</tr>
            </thead>
            <tbody>
              {rows.map((r) => <Row key={r[0]}>{r.map((v, i) => <Cell key={i}>{v}</Cell>)}</Row>)}
            </tbody>
            <tfoot>
              <tr>{totals.map((v) => <TotalCell key={v}>{v}</TotalCell>)}</tr>
            </tfoot>
          </Table>
        </GridArea>
        <Pager>
          <PagerButton aria-label="Первая страница"><Arrow flip bar off /></PagerButton>
          <PagerButton aria-label="Предыдущая страница"><Arrow flip off /></PagerButton>
          <Divider />
          <PagerLabel>Стр. <PageInput defaultValue="1" /> из 2</PagerLabel>
          <Divider />
          <PagerButton aria-label="Следующая страница"><Arrow /></PagerButton>
          <PagerButton aria-label="Последняя страница"><Arrow bar /></PagerButton>
          <Divider />
          <PagerButton aria-label="Обновить данные"><RefreshIcon /></PagerButton>
          <Divider />
          <PagerLabel>
            Записей:
            <SizeBox>
              <select defaultValue="25"><option>25</option><option>50</option></select>
              <SizeArrow><svg width="9" height="6" viewBox="0 0 9 6"><path d="m1 1 3.500 3.500L8 1" fill="none" stroke="#3c5a86" strokeWidth="2" /></svg></SizeArrow>
            </SizeBox>
          </PagerLabel>
          <Spacer />
          Записи с 1 по 25, всего 30
        </Pager>
      </Panel>

      <Taskbar>
        <Shine width="90" height="40" viewBox="0 0 90 40">
          <path d="M0 0H21C38 12 58 26 76 40H57C40 24 22 11 0 0z" fill="#a9d3f7" opacity=".85" />
        </Shine>
        <Start aria-label="Пуск"><StartOrb /></Start>
        <StackedTask>
          <TaskButton $state="open" aria-label="Internet Explorer"><IeIcon /></TaskButton>
          <StackEdge /><StackEdge />
        </StackedTask>
        <TaskButton $state="open" aria-label="Проводник"><ExplorerIcon /></TaskButton>
        <TaskButton aria-label="WordPad"><WordPadIcon /></TaskButton>
        <TaskButton aria-label="Windows Media"><PlayerIcon /></TaskButton>
        <TaskButton aria-label="Chrome"><ChromeIcon /></TaskButton>
        <TaskButton $state="focus" aria-label="Firefox"><FirefoxIcon /></TaskButton>
        <TaskButton aria-label="Excel"><OfficeIcon letter="X" tile="#107c41" tones={["#21a366", "#33c481", "#21a366", "#21a366", "#107c41", "#107c41", "#185c37", "#185c37"]} /></TaskButton>
        <TaskButton aria-label="Outlook"><OutlookIcon /></TaskButton>
        <TaskButton aria-label="PowerPoint"><OfficeIcon round letter="P" tile="#c43e1c" tones={["#ed6c47", "#ff8f6b", "#d35230"]} /></TaskButton>
        <TaskButton aria-label="OneNote"><OneNoteIcon /></TaskButton>
        <TaskButton aria-label="Word"><OfficeIcon letter="W" tile="#185abd" tones={["#41a5ee", "#41a5ee", "#2b7cd3", "#2b7cd3", "#185abd", "#185abd", "#103f91", "#103f91"]} /></TaskButton>
        <Tray>
          <Lang>RU</Lang>
          <TrayMore aria-label="Скрытые значки"><svg width="8" height="5"><path d="M4 0 8 5H0z" fill="#fff" /></svg></TrayMore>
          <svg width="17" height="16" viewBox="0 0 17 16"><path d="M6 1.500 9 3l2-2.500 4 .5v4l-1.500 3 2.500 4-3 3-3-1-3 .5-2-2.500-4 1.500L.5 10 3 7z" fill="#f77f0e" /><circle cx="8.500" cy="8" r="2.300" fill="none" stroke="#fff" strokeWidth="1.300" /><path d="M11 5.500v5" stroke="#fff" strokeWidth="1.300" /></svg>
          <svg width="16" height="15" viewBox="0 0 16 15" fill="none" stroke="#fff" strokeWidth="1.300"><path d="M5.500 3.500h9.500v7.500H5.500zM7 13.500h7M10.500 11v2.500M1 3.500h4v3H1zM2 1v2M4 1v2M3 6.500V12h2" /></svg>
          <svg width="16" height="15" viewBox="0 0 16 15"><path d="M1 5h2.500L7 1.500v12L3.500 10H1z" fill="#fff" /><path d="M9 5.500q1.500 2 0 4M11 4q2.500 3.500 0 7M13 2.500q3.500 5 0 10" fill="none" stroke="#fff" /></svg>
          <Clock>10:40<br />30.03.2020</Clock>
          <ShowDesktop aria-label="Свернуть все окна" />
        </Tray>
      </Taskbar>
    </Screen>
  );
}
